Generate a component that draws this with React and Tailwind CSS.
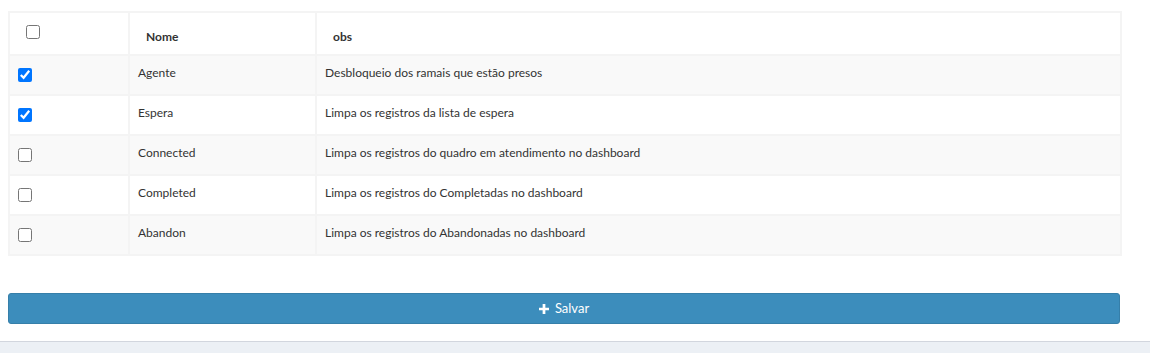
import { useState } from 'react'

const rows = [
  { id: 'agente', nome: 'Agente', obs: 'Desbloqueio dos ramais que estão presos', checked: true },
  { id: 'espera', nome: 'Espera', obs: 'Limpa os registros da lista de espera', checked: true },
  { id: 'connected', nome: 'Connected', obs: 'Limpa os registros do quadro em atendimento no dashboard', checked: false },
  { id: 'completed', nome: 'Completed', obs: 'Limpa os registros do Completadas no dashboard', checked: false },
  { id: 'abandon', nome: 'Abandon', obs: 'Limpa os registros do Abandonadas no dashboard', checked: false },
]

export default function App() {
  const [checked, setChecked] = useState(() =>
    Object.fromEntries(rows.map((r) => [r.id, r.checked]))
  )

  const toggle = (id) => setChecked((c) => ({ ...c, [id]: !c[id] }))

  return (
    <div className="flex h-[353px] flex-col bg-white font-['Lato','Noto_Sans',sans-serif] text-[12px] text-[#333]">
      <div className="flex-1 px-2 pt-[11px]">
        <table className="w-[1114px] border-collapse border border-[#f0f0f0]">
          <thead>
            <tr className="h-[43px] bg-white">
              <th className="w-[120px] border-2 border-[#f4f4f4] pl-[16px] pt-0 pb-[6px] text-left align-top">
                <input type="checkbox" className="mt-[12px] h-[14px] w-[14px]" />
              </th>
              <th className="w-[187px] border-2 border-[#f4f4f4] pl-[16px] pt-[7px] text-left font-bold">Nome</th>
              <th className="border-2 border-[#f4f4f4] pl-[16px] pt-[7px] text-left font-bold">obs</th>
            </tr>
          </thead>
          <tbody>
            {rows.map((r, i) => (
              <tr key={r.id} className={`h-[40px] ${i % 2 === 0 ? 'bg-[#f9f9f9]' : 'bg-white'}`}>
                <td className="border-2 border-[#f4f4f4] pl-[8px]">
                  <input
                    type="checkbox"
                    checked={checked[r.id]}
                    onChange={() => toggle(r.id)}
                    className="block h-[14px] w-[14px]"
                  />
                </td>
                <td className="border-2 border-[#f4f4f4] pl-[8px] pb-[4px]">{r.nome}</td>
                <td className="border-2 border-[#f4f4f4] pl-[8px] pb-[4px]">{r.obs}</td>
              </tr>
            ))}
          </tbody>
        </table>

        <button
          type="button"
          className="mt-[37px] flex h-[31px] w-[1112px] items-center justify-center gap-[6px] rounded-[3px] border border-[#367fa9] bg-[#3c8dbc] text-[13px] text-white"
        >
          <svg width="10" height="10" viewBox="0 0 11 11" fill="white">
            <path d="M4 0h3v4h4v3H7v4H4V7H0V4h4z" />
          </svg>
          Salvar
        </button>
      </div>
      <div className="h-[12px] border-t border-[#d2d6de] bg-[#ecf0f5]" />
    </div>
  )
}
